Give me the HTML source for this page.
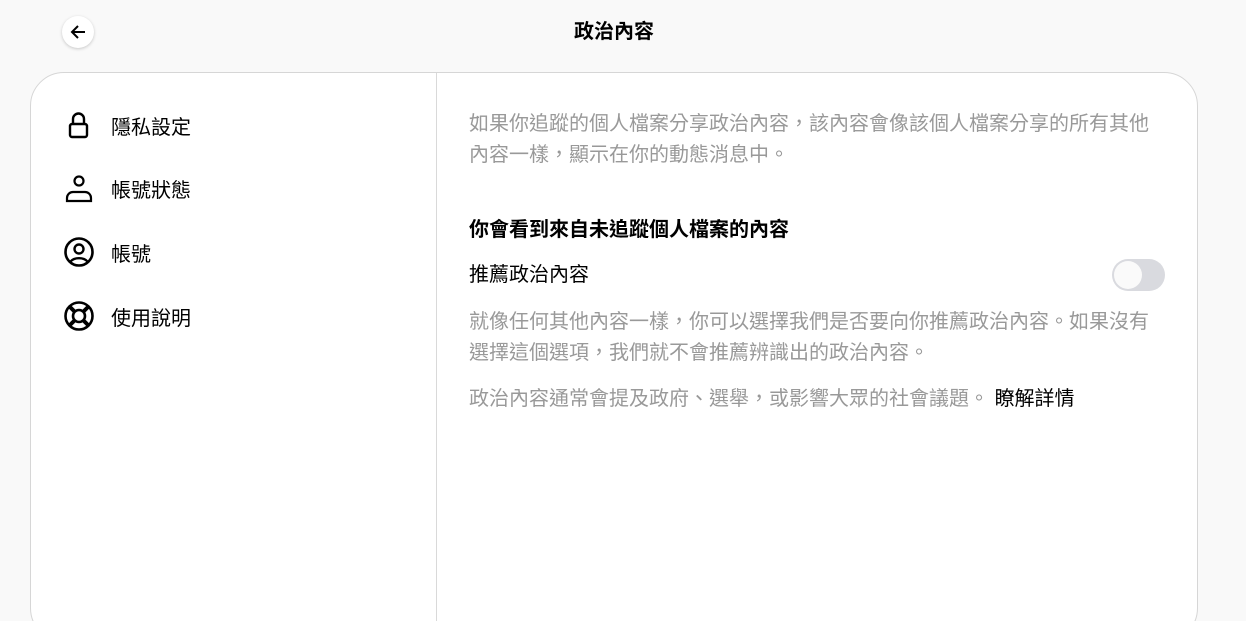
<!DOCTYPE html>
<html><head><meta charset="utf-8"><style>
*{margin:0;padding:0;box-sizing:border-box}
html,body{width:1246px;height:621px;overflow:hidden}
body{background:#f9f9f9;font-family:"Liberation Sans","Noto Sans CJK TC",sans-serif;position:relative;color:#000}
.back{position:absolute;left:62px;top:16px;width:32px;height:32px;border-radius:50%;background:#fff;box-shadow:0 1px 3px rgba(0,0,0,.2);display:flex;align-items:center;justify-content:center}
.title{position:absolute;left:0;width:1228px;top:19px;text-align:center;font-size:20px;font-weight:bold;line-height:26px}
.card{position:absolute;left:30px;top:72px;width:1168px;height:570px;background:#fff;border:1px solid #d6d6d6;border-radius:34px}
.div{position:absolute;left:405px;top:0;bottom:0;width:1px;background:#d9d9d9}
.item{position:absolute;left:32px;display:flex;align-items:center;font-size:20px;height:30px}
.item svg{width:32px;height:32px;margin-right:16px}
.r{position:absolute;left:438px;width:690px;font-size:20px;line-height:31px}
.g{color:#999}
.tog{position:absolute;left:1081px;top:186px;width:53px;height:32px;border-radius:16px;background:#d9dadf}
.tog:after{content:"";position:absolute;left:2px;top:2px;width:28px;height:28px;border-radius:50%;background:#fafafa}
</style></head><body>
<div class="back"><svg width="18" height="18" viewBox="0 0 18 18"><path d="M16 9H3M9 3L3 9l6 6" stroke="#000" stroke-width="2" fill="none"/></svg></div>
<div class="title">政治內容</div>
<div class="card">
<div class="div"></div>
<div class="item" style="top:37px"><svg viewBox="0 0 32 32"><rect x="7" y="15" width="17" height="13" rx="2" fill="none" stroke="#000" stroke-width="2.4"/><path d="M10 15V10a5.5 5.5 0 0 1 11 0v5" fill="none" stroke="#000" stroke-width="2.4"/></svg>隱私設定</div>
<div class="item" style="top:100px"><svg viewBox="0 0 32 32"><circle cx="16" cy="9" r="4.5" fill="none" stroke="#000" stroke-width="2.2"/><path d="M4 29v-3a6 6 0 0 1 6-6h12a6 6 0 0 1 6 6v3z" fill="none" stroke="#000" stroke-width="2.2"/></svg>帳號狀態</div>
<div class="item" style="top:164px"><svg viewBox="0 0 32 32"><circle cx="16" cy="16" r="13.5" fill="none" stroke="#000" stroke-width="2.6"/><circle cx="16" cy="13" r="4.5" fill="none" stroke="#000" stroke-width="2.4"/><path d="M7.5 25.5a10 7 0 0 1 17 0" fill="none" stroke="#000" stroke-width="2.4"/></svg>帳號</div>
<div class="item" style="top:228px"><svg viewBox="0 0 32 32"><circle cx="16" cy="16" r="13.5" fill="none" stroke="#000" stroke-width="2.6"/><circle cx="16" cy="16" r="6" fill="none" stroke="#000" stroke-width="2.6"/><path d="M7 7l5 5M25 7l-5 5M7 25l5-5M25 25l-5-5" stroke="#000" stroke-width="4"/></svg>使用說明</div>
<div class="r g" style="top:36px">如果你追蹤的個人檔案分享政治內容，該內容會像該個人檔案分享的所有其他內容一樣，顯示在你的動態消息中。</div>
<div class="r" style="top:142px;font-weight:bold">你會看到來自未追蹤個人檔案的內容</div>
<div class="r" style="top:187px">推薦政治內容</div>
<div class="tog"></div>
<div class="r g" style="top:234px">就像任何其他內容一樣，你可以選擇我們是否要向你推薦政治內容。如果沒有選擇這個選項，我們就不會推薦辨識出的政治內容。</div>
<div class="r g" style="top:311px">政治內容通常會提及政府、選舉，或影響大眾的社會議題。 <span style="color:#000">瞭解詳情</span></div>
</div>
</body></html>
